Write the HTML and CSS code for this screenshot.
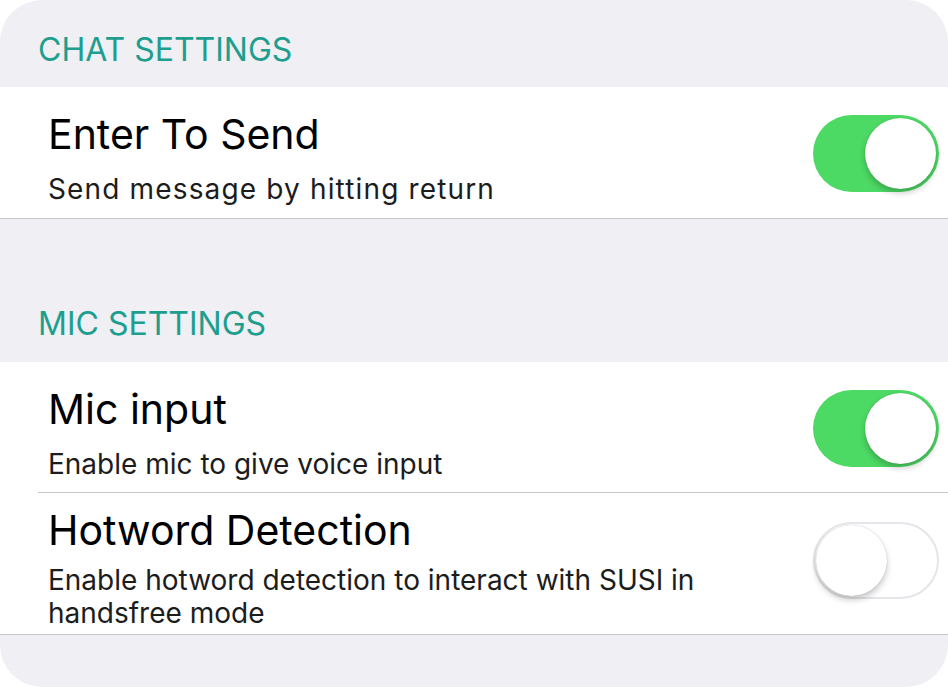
FILE: index.html
```html
<!DOCTYPE html>
<html>
<head>
<meta charset="utf-8">
<link rel="stylesheet" href="styles.css">
</head>
<body>
<div class="screen">
  <div class="section-header first">CHAT SETTINGS</div>
  <div class="group">
    <div class="row">
      <div class="text">
        <div class="title">Enter To Send</div>
        <div class="subtitle wide">Send message by hitting return</div>
      </div>
      <div class="toggle on"><div class="knob"></div></div>
    </div>
  </div>
  <div class="section-header">MIC SETTINGS</div>
  <div class="group">
    <div class="row divided">
      <div class="text">
        <div class="title">Mic input</div>
        <div class="subtitle">Enable mic to give voice input</div>
      </div>
      <div class="toggle on"><div class="knob"></div></div>
    </div>
    <div class="row tall">
      <div class="text">
        <div class="title">Hotword Detection</div>
        <div class="subtitle">Enable hotword detection to interact with SUSI in handsfree mode</div>
      </div>
      <div class="toggle off"><div class="knob"></div></div>
    </div>
  </div>
</div>
</body>
</html>
```
FILE: styles.css
```css
html, body {
  margin: 0;
  padding: 0;
  background: #ffffff;
}
body {
  font-family: Inter, "Liberation Sans", sans-serif;
  width: 948px;
  height: 687px;
  overflow: hidden;
}
.screen {
  width: 948px;
  height: 687px;
  background: #efeff4;
  border-radius: 42px;
  overflow: hidden;
}
.section-header {
  color: #1d9e8e;
  font-size: 32px;
  line-height: 40px;
  padding: 85px 0 18px 38px;
}
.section-header.first {
  padding-top: 30px;
  padding-bottom: 17px;
}
.group {
  background: #ffffff;
  border-bottom: 1px solid #c8c7cc;
}
.row {
  position: relative;
  display: flex;
  align-items: center;
  justify-content: space-between;
  padding: 22px 9px 13px 48px;
  min-height: 96px;
}
.row.divided::after {
  content: "";
  position: absolute;
  left: 38px;
  right: 0;
  bottom: 0;
  height: 1px;
  background: #c8c7cc;
}
.row.tall {
  padding-top: 12px;
  padding-bottom: 4px;
}
.text {
  flex: 1;
  min-width: 0;
  padding-right: 90px;
}
.title {
  font-size: 41px;
  line-height: 50px;
  color: #000000;
}
.subtitle {
  font-size: 28px;
  line-height: 32px;
  color: #1c1c1c;
  margin-top: 14px;
}
.subtitle.wide {
  letter-spacing: 1.15px;
}
.row.tall .subtitle {
  margin-top: 9px;
  line-height: 33px;
}
.toggle {
  flex: none;
  width: 126px;
  height: 77px;
  border-radius: 39px;
  box-sizing: border-box;
  display: flex;
  align-items: center;
  padding: 3px;
  margin-bottom: 8px;
}
.row.tall .toggle {
  margin-bottom: 15px;
}
.toggle.on {
  background: #4cd964;
  justify-content: flex-end;
}
.toggle.off {
  background: #ffffff;
  border: 2px solid #e5e5ea;
  justify-content: flex-start;
  padding: 1px;
}
.knob {
  width: 71px;
  height: 71px;
  border-radius: 50%;
  background: #ffffff;
  box-shadow: 0 4px 6px rgba(0, 0, 0, 0.22), 0 0 1px rgba(0, 0, 0, 0.25);
}
```
